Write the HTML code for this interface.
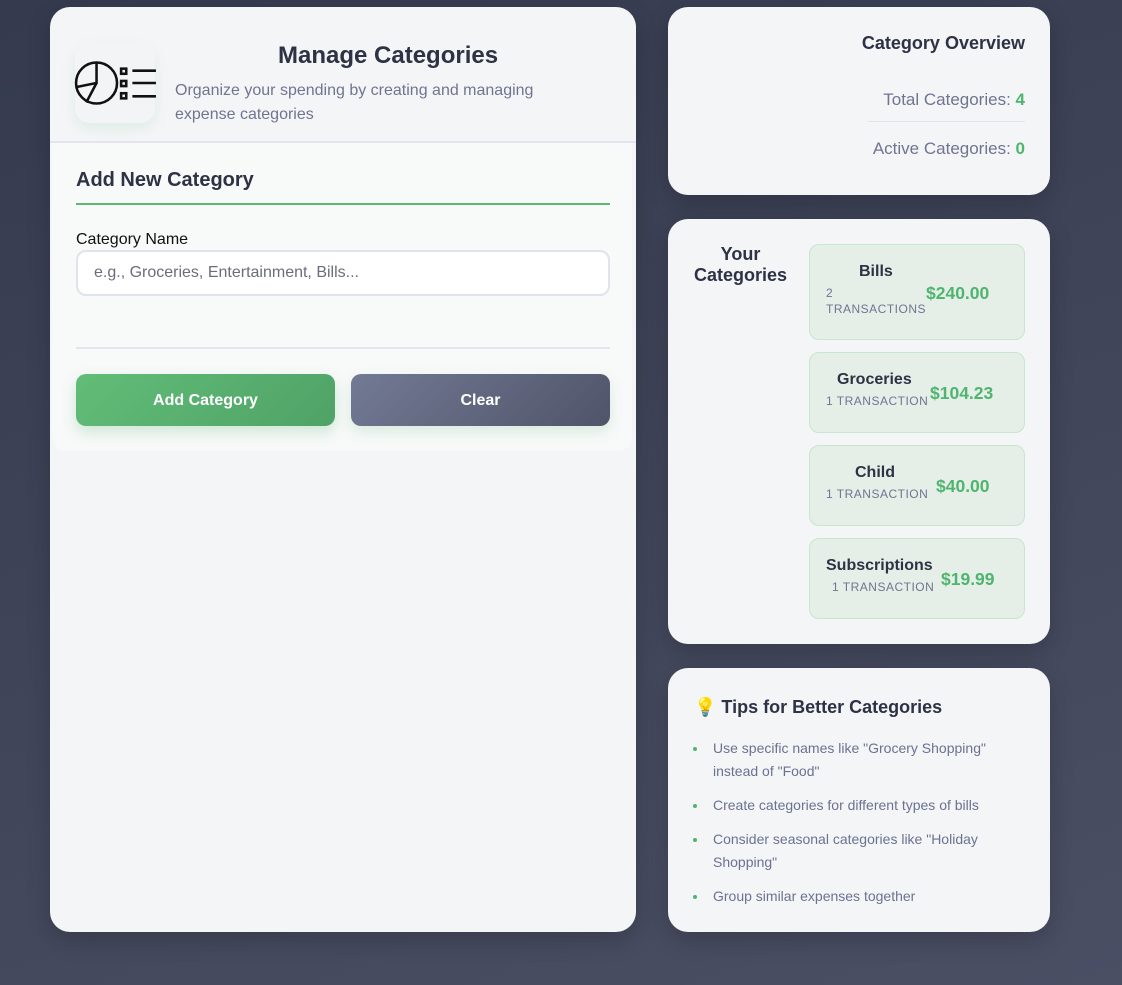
<!DOCTYPE html>
<html><head><style>
*{margin:0;padding:0;box-sizing:border-box}
body{width:1122px;height:985px;overflow:hidden;background:linear-gradient(160deg,#353a4e,#4b4f64);font-family:"Liberation Sans",sans-serif;position:relative}
.card{position:absolute;background:#f4f5f7;border-radius:20px;box-shadow:0 8px 24px rgba(0,0,0,.2)}
.a{position:absolute}
.item{position:absolute;left:141px;width:216px;background:#e5efe8;border:1px solid #c6e6cd;border-radius:10px}
.nm{position:absolute;font-weight:bold;font-size:16px;color:#2d3244}
.tx{position:absolute;font-size:12px;color:#6f7590;letter-spacing:.5px;line-height:16px}
.amt{position:absolute;font-weight:bold;font-size:17.5px;color:#4fb56e}
li{list-style:none;position:relative;padding-left:20px;font-size:14px;color:#6b7290;line-height:23px;margin-bottom:11px}
li:before{content:"";position:absolute;left:0;top:10px;width:4px;height:4px;border-radius:50%;background:#4fb56e}
</style></head><body>
<div class="card" style="left:50px;top:7px;width:586px;height:925px;overflow:hidden">
 <div class="a" style="left:25px;top:36px;width:80px;height:80px;background:#f3f4f5;border-radius:14px;box-shadow:0 6px 14px rgba(80,180,110,.12)">
  <svg width="84" height="64" viewBox="0 0 82 60" style="position:absolute;left:-1px;top:8px" fill="none" stroke="#111" stroke-width="2.5">
   <circle cx="22" cy="30" r="20"/><path d="M22 10V30L2 34M22 30L12 49"/>
   <rect x="46" y="16" width="5" height="5"/><rect x="46" y="28" width="5" height="5"/><rect x="46" y="40" width="5" height="5"/>
   <path d="M57 18H80M57 30H80M57 43H80"/>
  </svg>
 </div>
 <div class="a" style="left:228px;top:35px;font-size:24px;font-weight:bold;color:#2d3244">Manage Categories</div>
 <div class="a" style="left:125px;top:72px;width:420px;font-size:16px;line-height:24px;color:#6f7590">Organize your spending by creating and managing expense categories</div>
 <div class="a" style="left:0;top:134px;width:586px;height:2px;background:#e2e4ef"></div>
 <div class="a" style="left:2px;top:136px;width:580px;height:308px;background:#f8f9f9;border-radius:0 0 14px 14px"></div>
 <div class="a" style="left:26px;top:162px;font-size:20px;font-weight:bold;color:#2d3244">Add New Category</div>
 <div class="a" style="left:26px;top:196px;width:534px;height:2px;background:#5cb874"></div>
 <div class="a" style="left:26px;top:224px;font-size:16px;color:#111">Category Name</div>
 <div class="a" style="left:26px;top:243px;width:534px;height:46px;background:#fff;border:2px solid #e0e2ee;border-radius:10px;padding:12px 16px;font-size:16px;color:#6b6e78">e.g., Groceries, Entertainment, Bills...</div>
 <div class="a" style="left:26px;top:340px;width:534px;height:2px;background:#e2e4ef"></div>
 <div class="a" style="left:26px;top:367px;width:259px;height:52px;border-radius:10px;background:linear-gradient(135deg,#62bd78,#4fa266);color:#fff;font-weight:bold;font-size:16px;text-align:center;line-height:54px;box-shadow:0 6px 14px rgba(80,180,110,.25)">Add Category</div>
 <div class="a" style="left:301px;top:367px;width:259px;height:52px;border-radius:10px;background:linear-gradient(135deg,#737a94,#4f5469);color:#fff;font-weight:bold;font-size:16px;text-align:center;line-height:54px;box-shadow:0 6px 14px rgba(80,180,110,.18)">Clear</div>
</div>

<div class="card" style="left:668px;top:7px;width:382px;height:188px">
 <div class="a" style="right:25px;top:26px;font-size:18px;font-weight:bold;color:#2d3244">Category Overview</div>
 <div class="a" style="right:25px;top:83px;font-size:17px;color:#6f7590">Total Categories: <b style="color:#4fb56e">4</b></div>
 <div class="a" style="left:200px;top:114px;width:157px;height:1px;background:#e2e4ea"></div>
 <div class="a" style="right:25px;top:132px;font-size:17px;color:#6f7590">Active Categories: <b style="color:#4fb56e">0</b></div>
</div>

<div class="card" style="left:668px;top:219px;width:382px;height:425px">
 <div class="a" style="left:16px;top:25px;width:113px;text-align:center;font-size:18px;font-weight:bold;color:#2d3244;line-height:21px">Your Categories</div>
 <div class="item" style="top:25px;height:96px"><div class="nm" style="left:49px;top:18px">Bills</div><div class="tx" style="left:16px;top:40px">2<br>TRANSACTIONS</div><div class="amt" style="left:116px;top:38px">$240.00</div></div>
 <div class="item" style="top:133px;height:81px"><div class="nm" style="left:27px;top:18px">Groceries</div><div class="tx" style="left:16px;top:40px">1 TRANSACTION</div><div class="amt" style="left:120px;top:30px">$104.23</div></div>
 <div class="item" style="top:226px;height:81px"><div class="nm" style="left:45px;top:18px">Child</div><div class="tx" style="left:16px;top:40px">1 TRANSACTION</div><div class="amt" style="left:126px;top:30px">$40.00</div></div>
 <div class="item" style="top:319px;height:81px"><div class="nm" style="left:16px;top:18px">Subscriptions</div><div class="tx" style="left:22px;top:40px">1 TRANSACTION</div><div class="amt" style="left:131px;top:30px">$19.99</div></div>
</div>

<div class="card" style="left:668px;top:668px;width:382px;height:264px">
 <div class="a" style="left:26px;top:29px;font-size:18px;font-weight:bold;color:#2d3244">💡 Tips for Better Categories</div>
 <ul class="a" style="left:25px;top:69px;width:330px">
  <li>Use specific names like "Grocery Shopping" instead of "Food"</li>
  <li>Create categories for different types of bills</li>
  <li>Consider seasonal categories like "Holiday Shopping"</li>
  <li>Group similar expenses together</li>
 </ul>
</div>
</body></html>
